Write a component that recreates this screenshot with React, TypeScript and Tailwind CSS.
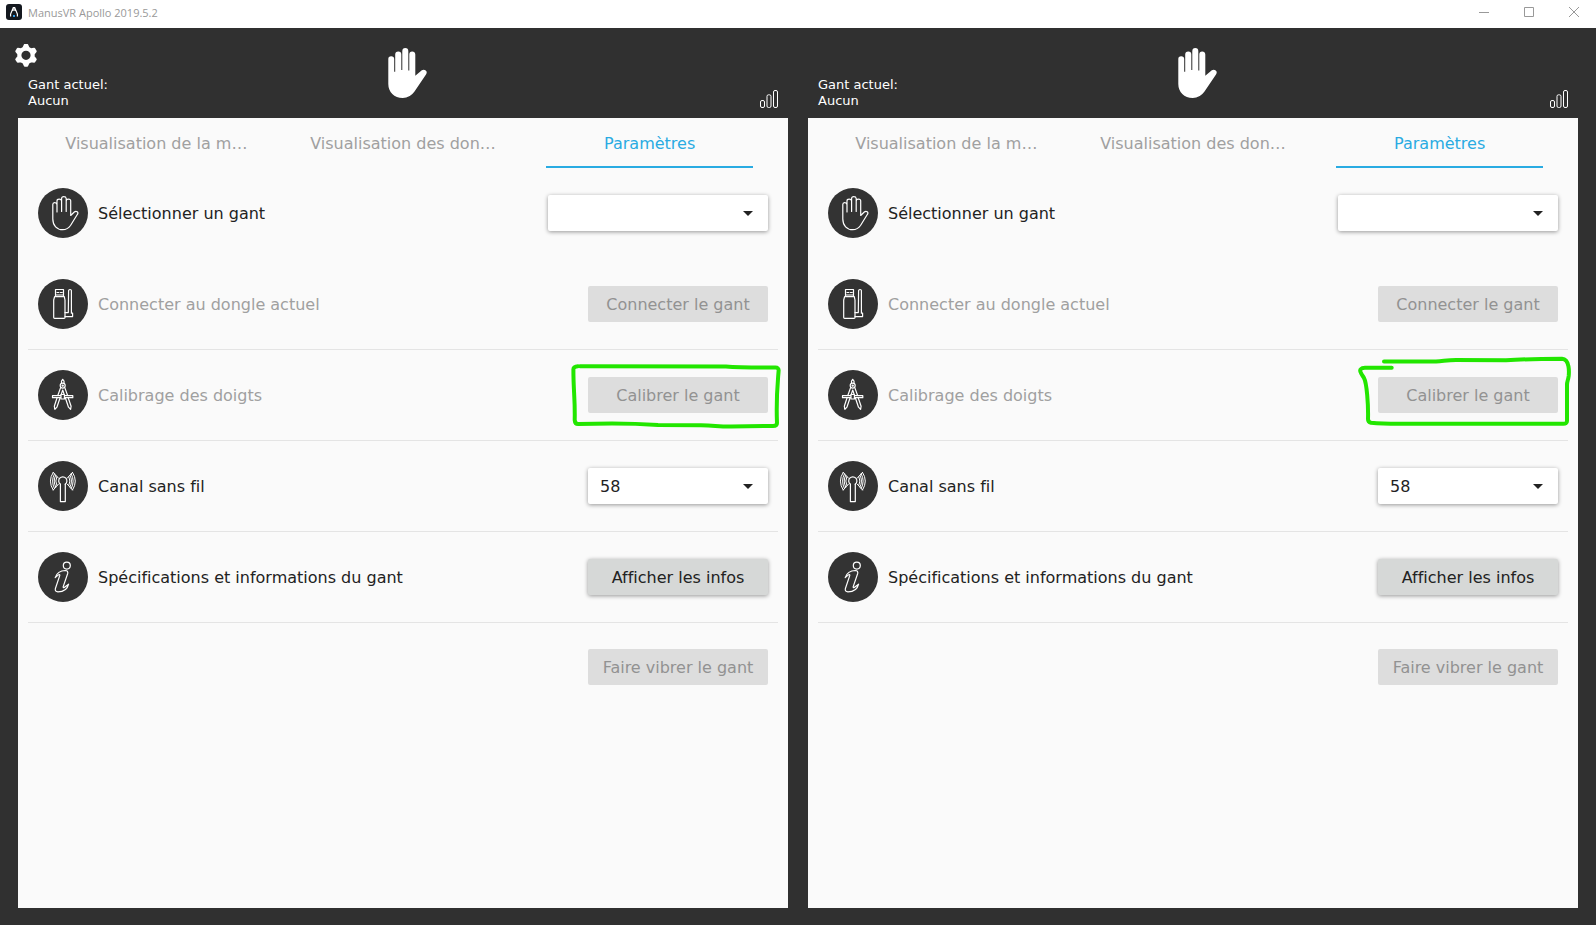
import type { ReactNode } from 'react';
import { clsx } from 'clsx';

type IconKind = 'hand' | 'dongle' | 'compass' | 'antenna' | 'info';
type Side = 'left' | 'right';

const TABS = ['Visualisation de la m…', 'Visualisation des don…', 'Paramètres'];

export default function App() {
  return (
    <div className="min-h-screen flex flex-col bg-[#303030] font-['DejaVu_Sans',sans-serif] [font-variant-ligatures:none]">
      <TitleBar />
      <main className="relative flex-1 grid grid-cols-2 gap-5 px-[18px] pb-[17px]">
        <button type="button" aria-label="Options" className="absolute left-[14px] top-4 text-white">
          <GearIcon />
        </button>
        <GlovePane side="left" />
        <GlovePane side="right" />
      </main>
    </div>
  );
}

function TitleBar() {
  return (
    <header className="h-7 flex items-center bg-white pl-[6px] text-[#999999]">
      <AppLogo />
      <h1 className="ml-[6px] text-[11px] leading-4 pb-[2px] font-['Open_Sans',sans-serif]">
        ManusVR Apollo 2019.5.2
      </h1>
      <div className="ml-auto flex h-full pb-1">
        <WindowButton label="Réduire">
          <path d="M0 5.5H10" />
        </WindowButton>
        <WindowButton label="Agrandir">
          <path d="M.5 .5H9.5V9.5H.5Z" />
        </WindowButton>
        <WindowButton label="Fermer">
          <path d="M0 0L10 10M10 0L0 10" />
        </WindowButton>
      </div>
    </header>
  );
}

function WindowButton({ label, children }: { label: string; children: ReactNode }) {
  return (
    <button type="button" aria-label={label} className="w-[45px] flex items-center justify-center">
      <svg width="10" height="10" viewBox="0 0 10 10" fill="none" stroke="currentColor">
        {children}
      </svg>
    </button>
  );
}

function GlovePane({ side }: { side: Side }) {
  return (
    <section className="flex flex-col min-w-0">
      <div className="h-[90px] grid grid-cols-[1fr_auto_1fr] items-end px-[10px] text-white">
        <p className="text-[13px] leading-4 pb-[9px]">
          Gant actuel:
          <br />
          Aucun
        </p>
        <HandSolid />
        <SignalIcon />
      </div>

      <div className="flex-1 bg-[#fafafa] text-base leading-6 text-[#222222]">
        <div role="tablist" className="grid grid-cols-3 px-[15px]">
          {TABS.map((tab) => (
            <button
              key={tab}
              type="button"
              role="tab"
              aria-selected={tab === 'Paramètres'}
              className={clsx(
                'h-[50px] mx-5 pt-1 border-b-2 whitespace-nowrap flex items-center justify-center',
                tab === 'Paramètres' ? 'border-[#29abe2] text-[#29abe2]' : 'border-transparent text-[#a0a0a0]',
              )}
            >
              {tab}
            </button>
          ))}
        </div>

        <div className="px-[10px]">
          <Row icon="hand" label="Sélectionner un gant" htmlFor={`glove-${side}`} noDivider>
            <Dropdown id={`glove-${side}`} options={['']} wide />
          </Row>
          <Row icon="dongle" label="Connecter au dongle actuel" muted>
            <ActionButton disabled>Connecter le gant</ActionButton>
          </Row>
          <Row icon="compass" label="Calibrage des doigts" muted>
            <ActionButton disabled>Calibrer le gant</ActionButton>
            <Highlight side={side} />
          </Row>
          <Row icon="antenna" label="Canal sans fil" htmlFor={`channel-${side}`}>
            <Dropdown id={`channel-${side}`} options={['58']} />
          </Row>
          <Row icon="info" label="Spécifications et informations du gant">
            <ActionButton>Afficher les infos</ActionButton>
          </Row>
          <div className="h-[88px] flex items-center justify-end px-[10px]">
            <ActionButton disabled>Faire vibrer le gant</ActionButton>
          </div>
        </div>
      </div>
    </section>
  );
}

interface RowProps {
  icon: IconKind;
  label: string;
  htmlFor?: string;
  muted?: boolean;
  noDivider?: boolean;
  children: ReactNode;
}

function Row({ icon, label, htmlFor, muted, noDivider, children }: RowProps) {
  const textClass = clsx('ml-[10px] pt-[2px]', muted && 'text-[#a0a0a0]');
  return (
    <div
      className={clsx(
        'h-[91px] flex items-center px-[10px] border-b',
        noDivider ? 'border-transparent' : 'border-[#e4e4e4]',
      )}
    >
      <RoundIcon kind={icon} />
      {htmlFor ? (
        <label htmlFor={htmlFor} className={textClass}>
          {label}
        </label>
      ) : (
        <span className={textClass}>{label}</span>
      )}
      <div className="relative ml-auto">{children}</div>
    </div>
  );
}

function ActionButton({ disabled, children }: { disabled?: boolean; children: ReactNode }) {
  return (
    <button
      type="button"
      disabled={disabled}
      className={clsx(
        'block w-[180px] h-9 pt-[2px] rounded-xs whitespace-nowrap',
        disabled ? 'bg-[#dddddd] text-[#929292]' : 'bg-[#d6d8d7] shadow-[0_1px_4px_rgba(0,0,0,0.4)]',
      )}
    >
      {children}
    </button>
  );
}

function Dropdown({ id, options, wide }: { id: string; options: string[]; wide?: boolean }) {
  return (
    <>
      <select
        id={id}
        className={clsx(
          'block h-9 pt-[2px] pl-3 pr-10 rounded-xs bg-white appearance-none shadow-[0_1px_4px_rgba(0,0,0,0.4)]',
          wide ? 'w-[220px]' : 'w-[180px]',
        )}
      >
        {options.map((o) => (
          <option key={o}>{o}</option>
        ))}
      </select>
      <svg
        className="absolute right-[15px] top-4 pointer-events-none"
        width="10"
        height="5"
        viewBox="0 0 10 5"
        fill="#222222"
      >
        <path d="M0 0H10L5 5Z" />
      </svg>
    </>
  );
}

/* Marker strokes drawn around the calibration button */
function Highlight({ side }: { side: Side }) {
  return (
    <svg
      className="absolute -left-[22px] -top-[22px] pointer-events-none"
      width="224"
      height="80"
      viewBox="0 0 224 80"
      fill="none"
      stroke="#22e600"
      strokeWidth="4"
      strokeLinecap="round"
      strokeLinejoin="round"
    >
      {side === 'left' ? (
        <path d="M14 11.3L160 11.5C172 12.5 184 12.6 209 12.6Q213 12.4 212.6 16C211 36 210 44 211 68Q211 71 207 71L165 71.4C150 71.4 150 70.5 135 70.3L92 70C70 68.5 60 68.5 46 68.5L12 69Q9 69 8.7 65C9.2 45 7.4 36 7.4 15Q7 11.5 12 11.3" />
      ) : (
        <path d="M28 6.4H80C90 5.6 92 5 100 5L150 5.3C165 4.3 175 3.9 206 3.7C214 4 213 18 212.7 21C212 26 211 26 211 30V66Q211 69 207 68.8H51C35 69 24 68.7 15 67.8Q12 67 12 64C12.4 50 10.8 28 8 23C5 18 3 15.5 5 14Q6 12.7 9 12.7H35.7" />
      )}
    </svg>
  );
}

function RoundIcon({ kind }: { kind: IconKind }) {
  return (
    <svg
      className="shrink-0"
      width="50"
      height="50"
      viewBox="0 0 50 50"
      fill="none"
      stroke="white"
      strokeWidth="1.2"
      strokeLinejoin="round"
      strokeLinecap="round"
      aria-hidden="true"
    >
      <circle cx="25" cy="25" r="25" fill="#333333" stroke="none" />
      {kind === 'hand' && (
        <path d="M14.8 31V16.5Q14.8 14.6 16.6 14.6T19 16.5V24V13Q19 11.2 21.2 11.2T23.6 13V23.5V10.5Q23.6 8.6 25.8 8.6T28.2 10.5V23.5V13Q28.2 11.2 30.5 11.2T32.7 13V27.5L36.3 24Q37.8 22.7 39.2 23.8T39.3 26.5L32.5 37.5Q29.5 41.7 24.7 41.7C19 41.7 14.8 37.5 14.8 31Z" />
      )}
      {kind === 'dongle' && (
        <>
          <path d="M17.5 17.5V10.5H25.5V17.5M19 13.5H20.8M22.4 13.5H24.2M17.5 16H25.5" />
          <path d="M16.6 17.6H26.3L27 21V38.6Q27 39.4 26 39.4H16.6Q15.7 39.4 15.7 38.6V21Z" />
          <path d="M27 37.6H34.6V34.2H33.4V11.5Q33.3 10.5 32.2 10.5T30.6 11.5L30.3 33.6H27" />
        </>
      )}
      {kind === 'compass' && (
        <>
          <path d="M23.5 13.3V11L24.7 9.3L26 11V13.3" />
          <circle cx="24.7" cy="15.6" r="2.5" />
          <circle cx="24.7" cy="15.6" r=".6" />
          <path d="M22.7 17.4L19.8 25.5M19 28L16.3 36.2L16.9 39.3L18.9 37.2L22 28M22.9 25.5L24.7 20L26.5 25.5M27.4 28L30.5 37.2L32.6 39.3L33.1 36.2L30.3 28M29.6 25.5L26.7 17.4" />
          <path d="M14.5 25.7H34.8V27.7H14.5Z" />
          <path d="M23 24.5H26.4V29H23Z" fill="#333333" />
        </>
      )}
      {kind === 'antenna' && (
        <>
          <path d="M22.4 23.2A4.1 4.1 0 1 1 27.2 23.2" />
          <path d="M22.4 23.2V40.6H27.3V23.2" />
          <path
            strokeWidth="1"
            d="M18.8 15.8Q16.7 20 18.8 24.4M17.7 14.3Q14.6 20 17.7 26M16.5 12.8Q12.5 20 16.5 27.6M15.2 11.4Q9.4 20 15.2 29M15.2 11.4L20.5 17.2M15.2 29L20.5 23.1"
          />
          <path
            strokeWidth="1"
            d="M30.9 15.8Q33 20 30.9 24.4M32 14.3Q35.1 20 32 26M33.2 12.8Q37.2 20 33.2 27.6M34.5 11.4Q40.3 20 34.5 29M34.5 11.4L29.2 17.2M34.5 29L29.2 23.1"
          />
        </>
      )}
      {kind === 'info' && (
        <>
          <circle cx="28.8" cy="13.6" r="3.5" />
          <path d="M17.2 25.6C18.6 21.5 22 18.5 27.3 18.5Q30.3 18.7 29.7 21.5L25.2 34.6Q24.9 36.4 26.5 35.2L30.6 32.2C29.6 36.5 26 39.9 20 39.9Q16.6 39.6 17.4 36.5L21.8 23.4Q21.9 21.9 20.4 22.9Z" />
        </>
      )}
    </svg>
  );
}

function HandSolid() {
  return (
    <svg className="mb-5" width="50" height="50" viewBox="0 0 50 50" fill="currentColor" aria-hidden="true">
      <path d="M10.3 36V11Q10.3 8.2 13.2 8.2T16.2 11V23.8H17.2V6.5Q17.2 3.5 20.3 3.5T23.3 6.5V22H24.3V3.2Q24.3 0 27.3 0T30.3 3.2V22.5H31.3V6.5Q31.3 3.5 34.2 3.5T37.3 6.5V27.8L43.8 22.3Q45.8 20.9 47.7 22.5T48 26.5L36.5 43.6Q32 50 24.8 50C16.2 50 10.3 44 10.3 36Z" />
    </svg>
  );
}

function SignalIcon() {
  return (
    <svg
      className="justify-self-end mb-[10px]"
      width="18"
      height="18"
      viewBox="0 0 18 18"
      fill="none"
      stroke="currentColor"
      aria-hidden="true"
    >
      <rect x=".5" y="10.5" width="4" height="7" rx="1.5" />
      <rect x="7" y="4.8" width="4" height="12.7" rx="1.5" />
      <rect x="13.5" y=".5" width="4" height="17" rx="1.5" />
    </svg>
  );
}

function GearIcon() {
  return (
    <svg width="24" height="24" viewBox="0 .5 24 24" aria-hidden="true">
      <path
        fill="currentColor"
        stroke="currentColor"
        strokeWidth="2"
        strokeLinejoin="round"
        fillRule="evenodd"
        d="M10.8 1.4H13.2L14.6 4.4L17.1 5.8L20.2 5.3L21.7 7.8L19.7 10.4V13.2L21.7 15.9L20.2 18.3L17.1 17.8L14.6 19.2L13.2 22.2H10.8L9.4 19.2L6.9 17.8L3.8 18.3L2.3 15.9L4.3 13.2V10.4L2.3 7.8L3.8 5.3L6.9 5.8L9.4 4.4ZM12 6.2A5.6 5.6 0 1 0 12 17.4A5.6 5.6 0 1 0 12 6.2Z"
      />
    </svg>
  );
}

function AppLogo() {
  return (
    <svg className="mb-1" width="16" height="16" viewBox="0 0 16 16" aria-hidden="true">
      <rect width="16" height="16" rx="3" fill="#14181f" />
      <path
        d="M4.6 12.4V10L7.3 3.6H8.7L11.4 10V12.4M7.3 3.6L7 7M8.7 3.6L9 7"
        fill="none"
        stroke="white"
        strokeWidth="1.2"
      />
      <rect x="7" y="11" width="2" height="2" fill="#2f9be8" />
    </svg>
  );
}
